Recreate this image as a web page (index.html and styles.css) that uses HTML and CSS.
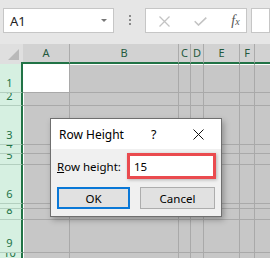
FILE: index.html
```html
<!DOCTYPE html>
<html>
<head>
<meta charset="utf-8">
<link rel="stylesheet" href="styles.css">
</head>
<body>
<div class="app">
  <div class="topbar">
    <div class="namebox"><span class="nb-text">A1</span><span class="nb-arrow"></span></div>
    <div class="dots"><i></i><i></i><i></i></div>
    <div class="fbar">
      <svg class="ic-x" width="11" height="11" viewBox="0 0 11 11"><path d="M0.5 0.5L10.5 10.5M10.5 0.5L0.5 10.5" stroke="#c3c3c3" stroke-width="1.3" fill="none"/></svg>
      <svg class="ic-ok" width="13" height="9" viewBox="0 0 13 9"><path d="M0.7 4.2L4.5 8L12.3 0.6" stroke="#c3c3c3" stroke-width="1.6" fill="none"/></svg>
      <span class="fx">f<span class="fx-x">x</span></span>
    </div>
    <div class="fbar-input"></div>
  </div>
  <div class="sheet">
    <div class="corner"></div>
    <div class="ch">A</div><div class="ch">B</div><div class="ch">C</div><div class="ch">D</div><div class="ch">E</div><div class="ch">F</div><div class="ch last"></div>

    <div class="rh">1</div><div class="c a1 r1"></div><div class="c r1"></div><div class="c r1"></div><div class="c r1"></div><div class="c r1"></div><div class="c r1"></div><div class="c r1"></div>
    <div class="rh">2</div><div class="c ca"></div><div class="c"></div><div class="c"></div><div class="c"></div><div class="c"></div><div class="c"></div><div class="c"></div>
    <div class="rh">3</div><div class="c ca"></div><div class="c"></div><div class="c"></div><div class="c"></div><div class="c"></div><div class="c"></div><div class="c"></div>
    <div class="rh">4</div><div class="c ca"></div><div class="c"></div><div class="c"></div><div class="c"></div><div class="c"></div><div class="c"></div><div class="c"></div>
    <div class="rh">5</div><div class="c ca"></div><div class="c"></div><div class="c"></div><div class="c"></div><div class="c"></div><div class="c"></div><div class="c"></div>
    <div class="rh">6</div><div class="c ca"></div><div class="c"></div><div class="c"></div><div class="c"></div><div class="c"></div><div class="c"></div><div class="c"></div>
    <div class="rh">7</div><div class="c ca"></div><div class="c"></div><div class="c"></div><div class="c"></div><div class="c"></div><div class="c"></div><div class="c"></div>
    <div class="rh">8</div><div class="c ca"></div><div class="c"></div><div class="c"></div><div class="c"></div><div class="c"></div><div class="c"></div><div class="c"></div>
    <div class="rh">9</div><div class="c ca"></div><div class="c"></div><div class="c"></div><div class="c"></div><div class="c"></div><div class="c"></div><div class="c"></div>
    <div class="rh">10</div><div class="c ca"></div><div class="c"></div><div class="c"></div><div class="c"></div><div class="c"></div><div class="c"></div><div class="c"></div>
  </div>

  <div class="dialog">
    <div class="dlg-title">
      <span class="dlg-name">Row Height</span>
      <span class="dlg-help">?</span>
      <svg class="dlg-close" width="11" height="11" viewBox="0 0 11 11"><path d="M0.5 0.5L10.5 10.5M10.5 0.5L0.5 10.5" stroke="#111" stroke-width="1" fill="none"/></svg>
    </div>
    <div class="dlg-body">
      <div class="field">
        <label class="lbl"><u>R</u>ow height:</label>
        <div class="input">15</div>
      </div>
      <div class="buttons">
        <div class="btn btn-ok">OK</div>
        <div class="btn btn-cancel">Cancel</div>
      </div>
    </div>
  </div>
</div>
</body>
</html>
```
FILE: styles.css
```css
html, body {
  margin: 0;
  padding: 0;
}
body {
  width: 270px;
  height: 258px;
  overflow: hidden;
  background: #fff;
  font-family: "Noto Sans", "Liberation Sans", sans-serif;
}
.app {
  position: relative;
  width: 270px;
  height: 258px;
  overflow: hidden;
}

/* top bar */
.topbar {
  height: 44px;
  box-sizing: border-box;
  background: #e6e6e6;
  display: flex;
  align-items: flex-start;
  padding-top: 8px;
}
.namebox {
  margin-left: 3px;
  width: 120px;
  height: 25px;
  box-sizing: border-box;
  background: #fff;
  border: 1px solid #c6c6c6;
  display: flex;
  align-items: center;
  justify-content: space-between;
  padding: 0 6px 0 6px;
}
.nb-text {
  font-family: "Noto Sans", sans-serif;
  font-size: 13px;
  color: #222;
  margin-top: 1px;
}
.nb-arrow {
  width: 0;
  height: 0;
  border-left: 3px solid transparent;
  border-right: 3px solid transparent;
  border-top: 3px solid #777;
}
.dots {
  margin-left: 15px;
  margin-top: 7px;
  display: flex;
  flex-direction: column;
  gap: 2px;
}
.dots i {
  display: block;
  width: 2px;
  height: 2px;
  background: #8a8a8a;
}
.fbar {
  margin-left: 14px;
  width: 110px;
  height: 25px;
  box-sizing: border-box;
  background: #fff;
  border: 1px solid #c6c6c6;
  display: flex;
  align-items: center;
  padding-left: 13px;
}
.ic-x {
  margin-top: 1px;
}
.ic-ok {
  margin-left: 24px;
  margin-top: 2px;
}
.fx {
  margin-left: 24px;
  font-family: "Liberation Serif", serif;
  font-style: italic;
  font-size: 14px;
  color: #555;
  line-height: 1;
}
.fx-x {
  font-size: 10px;
}
.fbar-input {
  margin-left: 4px;
  width: 20px;
  height: 25px;
  box-sizing: border-box;
  background: #fff;
  border: 1px solid #c6c6c6;
}

/* sheet */
.sheet {
  display: grid;
  grid-template-columns: 23px 47px 109px 12px 13px 36px 15px 1fr;
  grid-template-rows: 20px 29px 13px 39px 9px 11px 39px 5px 11px 33px 10px;
}
.corner {
  background:
    linear-gradient(#217346, #217346) right bottom / 2px 2px no-repeat,
    #dfdfdf;
  position: relative;
  overflow: hidden;
}
.corner::after {
  content: "";
  position: absolute;
  right: 4px;
  bottom: 4px;
  width: 0;
  height: 0;
  border-left: 11px solid transparent;
  border-bottom: 11px solid #b9b9b9;
}
.ch {
  background: #d2d2d2;
  border-right: 1px solid #ababab;
  border-bottom: 2px solid #217346;
  display: flex;
  align-items: center;
  justify-content: center;
  font-size: 11px;
  color: #245a3e;
  padding-bottom: 1px;
}
.ch.last {
  border-right: none;
}
.rh {
  background: #d6f0e1;
  border-right: 2px solid #217346;
  border-bottom: 1px solid #b3cfbf;
  display: flex;
  align-items: flex-end;
  justify-content: center;
  overflow: hidden;
  font-size: 11px;
  line-height: 11px;
  color: #217346;
  padding-bottom: 4px;
  padding-right: 2px;
}
.c {
  background: #c7c7c7;
  border-right: 1px solid #a9a9a9;
  border-bottom: 1px solid #a9a9a9;
}
.c:nth-child(8n) {
  border-right: none;
}
.ca {
  box-shadow: inset 1px 0 0 #fff;
}
.r1 {
  box-shadow: inset 0 1px 0 #fff;
}
.a1 {
  background: #fff;
  box-shadow: none;
}

/* dialog */
.dialog {
  position: absolute;
  left: 50px;
  top: 118px;
  width: 172px;
  height: 99px;
  box-sizing: border-box;
  border: 1px solid #6f6f6f;
  background: #f0f0f0;
  box-shadow: 2px 3px 6px rgba(0, 0, 0, 0.28);
  display: flex;
  flex-direction: column;
  font-family: "Noto Sans", sans-serif;
  font-size: 11.5px;
  color: #000;
}
.dlg-title {
  height: 30px;
  background: #fff;
  display: flex;
  align-items: center;
  padding-left: 8px;
  flex-shrink: 0;
}
.dlg-name {
  font-size: 12px;
  width: 92px;
}
.dlg-help {
  font-size: 12.5px;
  width: 42px;
}
.dlg-body {
  flex: 1;
  padding: 4px 5px 0 6px;
  display: flex;
  flex-direction: column;
}
.field {
  display: flex;
  align-items: center;
  justify-content: space-between;
  height: 26px;
}
.lbl {
  margin-top: 1px;
}
.input {
  width: 89px;
  height: 26px;
  box-sizing: border-box;
  border: 3px solid #ea4b4f;
  background: #fff;
  padding-left: 4px;
  display: flex;
  align-items: center;
  box-shadow: 1px 1px 3px rgba(0, 0, 0, 0.25);
}
.buttons {
  display: flex;
  justify-content: space-between;
  margin-top: 8px;
  padding-right: 1px;
}
.btn {
  height: 22px;
  box-sizing: border-box;
  background: #e1e1e1;
  display: flex;
  align-items: center;
  justify-content: center;
}
.btn-ok {
  width: 73px;
  border: 2px solid #0a78d7;
}
.btn-cancel {
  width: 75px;
  border: 1px solid #adadad;
}
```
